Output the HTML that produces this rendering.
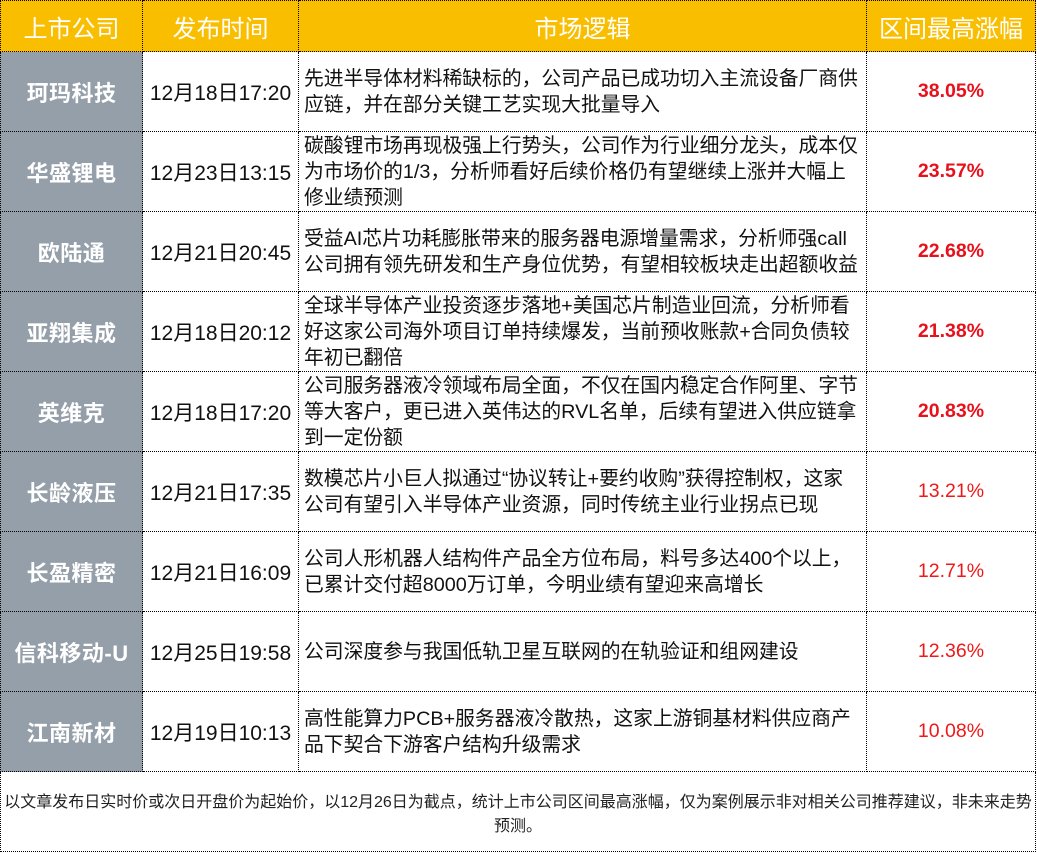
<!DOCTYPE html>
<html><head><meta charset="utf-8"><style>
*{margin:0;padding:0;box-sizing:border-box}
body{width:1037px;height:853px;background:#fff;font-family:"Liberation Sans","Noto Sans CJK SC",sans-serif;position:relative;overflow:hidden}
.c{position:absolute;display:flex;align-items:center;border-right:1px dotted #000;border-bottom:1px dotted #000;white-space:nowrap}
.h{background:#FABE00;color:#fff;font-size:24px;justify-content:center}
.n{background:#959FA9;color:#fff;font-size:22px;justify-content:center;font-weight:bold;letter-spacing:0.5px}
.d{font-size:21px;color:#111;justify-content:center}
.l{font-size:19.8px;color:#111;line-height:26px;padding-left:5px}
.p{font-size:19.5px;color:#f01818;justify-content:center}
.b{font-weight:bold;color:#e8101a}
</style></head><body>
<div class="c h" style="left:0;top:0;width:143px;height:52px;border-left:1px dotted #000;border-top:1px dotted #000">上市公司</div>
<div class="c h" style="left:143px;top:0;width:156px;height:52px;border-top:1px dotted #000">发布时间</div>
<div class="c h" style="left:299px;top:0;width:568px;height:52px;border-top:1px dotted #000">市场逻辑</div>
<div class="c h" style="left:867px;top:0;width:169px;height:52px;border-top:1px dotted #000">区间最高涨幅</div>
<div id="rows"></div>
<script>
var d=[
["珂玛科技","12月18日17:20","先进半导体材料稀缺标的，公司产品已成功切入主流设备厂商供<br>应链，并在部分关键工艺实现大批量导入","38.05%",1],
["华盛锂电","12月23日13:15","碳酸锂市场再现极强上行势头，公司作为行业细分龙头，成本仅<br>为市场价的1/3，分析师看好后续价格仍有望继续上涨并大幅上<br>修业绩预测","23.57%",1],
["欧陆通","12月21日20:45","受益AI芯片功耗膨胀带来的服务器电源增量需求，分析师强call<br>公司拥有领先研发和生产身位优势，有望相较板块走出超额收益","22.68%",1],
["亚翔集成","12月18日20:12","全球半导体产业投资逐步落地+美国芯片制造业回流，分析师看<br>好这家公司海外项目订单持续爆发，当前预收账款+合同负债较<br>年初已翻倍","21.38%",1],
["英维克","12月18日17:20","公司服务器液冷领域布局全面，不仅在国内稳定合作阿里、字节<br>等大客户，更已进入英伟达的RVL名单，后续有望进入供应链拿<br>到一定份额","20.83%",1],
["长龄液压","12月21日17:35","数模芯片小巨人拟通过“协议转让+要约收购”获得控制权，这家<br>公司有望引入半导体产业资源，同时传统主业行业拐点已现","13.21%",0],
["长盈精密","12月21日16:09","公司人形机器人结构件产品全方位布局，料号多达400个以上，<br>已累计交付超8000万订单，今明业绩有望迎来高增长","12.71%",0],
["信科移动-U","12月25日19:58","公司深度参与我国低轨卫星互联网的在轨验证和组网建设","12.36%",0],
["江南新材","12月19日10:13","高性能算力PCB+服务器液冷散热，这家上游铜基材料供应商产<br>品下契合下游客户结构升级需求","10.08%",0]];
var h="";
d.forEach(function(r,i){var t=52+i*80;
h+='<div class="c n" style="left:0;top:'+t+'px;width:143px;height:80px;border-left:1px dotted #000">'+r[0]+'</div>';
h+='<div class="c d" style="left:143px;top:'+t+'px;width:156px;height:80px">'+r[1]+'</div>';
h+='<div class="c l" style="left:299px;top:'+t+'px;width:568px;height:80px"><div>'+r[2]+'</div></div>';
h+='<div class="c p'+(r[4]?' b':'')+'" style="left:867px;top:'+t+'px;width:169px;height:80px">'+r[3]+'</div>';});
h+='<div class="c" style="left:0;top:772px;width:1036px;height:80px;border-left:1px dotted #000;font-size:16px;color:#222;line-height:24px;text-align:center;justify-content:center;align-items:flex-start;padding-top:19px"><div>以文章发布日实时价或次日开盘价为起始价，以12月26日为截点，统计上市公司区间最高涨幅，仅为案例展示非对相关公司推荐建议，非未来走势<br>预测。</div></div>';
document.getElementById("rows").outerHTML=h;
</script>
</body></html>
